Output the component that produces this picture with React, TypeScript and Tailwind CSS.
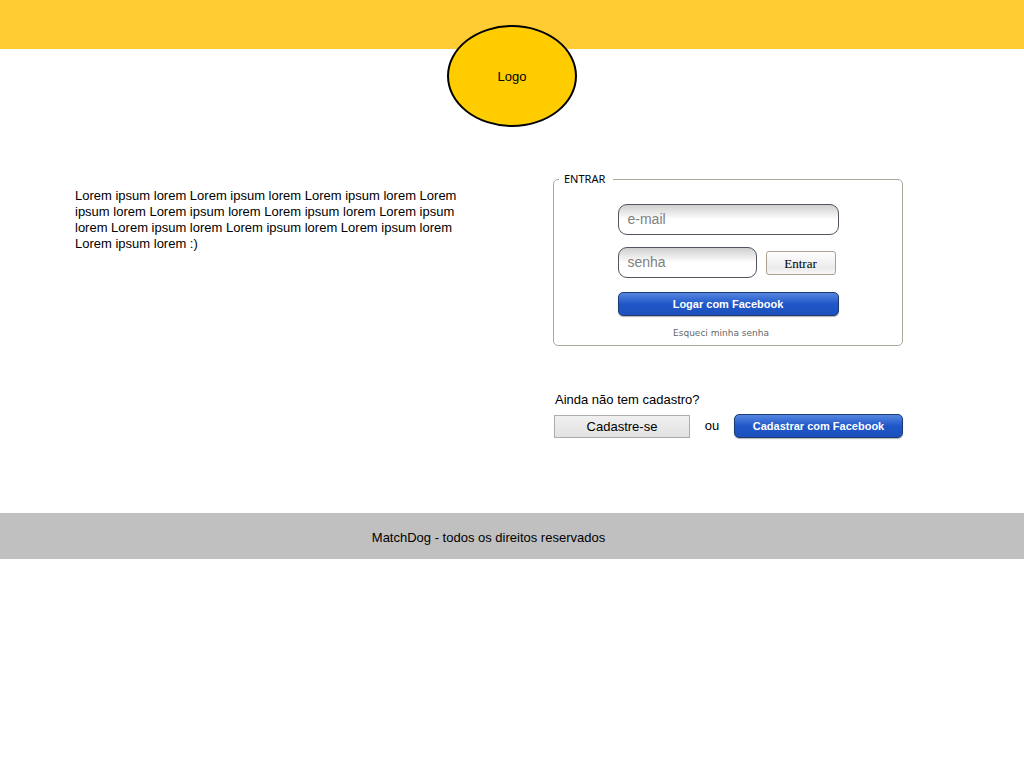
import React from "react";

const field =
  "h-[31px] rounded-[9px] border border-[#50555f] bg-linear-to-b from-[#cfcfcf] via-white via-50% to-white px-[9px] pb-[2px] text-[14px] text-black outline-none placeholder:text-[#808080]";

const facebook =
  "h-[24px] rounded-[5px] border border-[#1d3a73] bg-linear-to-b from-[#5585e0] via-[#1f57c8] via-50% to-[#1c50bd] pb-[1px] text-[11px] font-bold text-white shadow-[0_1px_1px_rgba(0,0,0,0.3)]";

export default function App() {
  return (
    <div className="min-h-screen bg-white font-['Liberation_Sans',Arial,sans-serif] text-[13px] leading-[16px] text-black">
      <header className="relative h-[49px] bg-[#ffcc33]">
        <div className="absolute top-[25px] left-1/2 flex h-[102px] w-[130px] -translate-x-1/2 items-center justify-center rounded-[50%] border-2 border-black bg-[#ffcc00] pt-[2px]">
          Logo
        </div>
      </header>

      <main className="flex items-start justify-between gap-8 pt-[122px] pr-[121px] pb-[75px] pl-[75px]">
        <p className="mt-[17px] max-w-[385px]">
          Lorem ipsum lorem Lorem ipsum lorem Lorem ipsum lorem Lorem ipsum lorem
          Lorem ipsum lorem Lorem ipsum lorem Lorem ipsum lorem Lorem ipsum lorem
          Lorem ipsum lorem Lorem ipsum lorem Lorem ipsum lorem :)
        </p>

        <div className="w-[350px] shrink-0">
          <form onSubmit={(e) => e.preventDefault()}>
            <fieldset className="rounded-[5px] border border-[#aca899] px-[5px] pb-[4px]">
              <legend className="pr-[8px] pl-[5px] font-['Noto_Sans',Tahoma,sans-serif] text-[11px]">
                ENTRAR
              </legend>
              <div className="mx-auto mt-[17px] flex w-[221px] flex-col">
                <input
                  type="email"
                  aria-label="e-mail"
                  placeholder="e-mail"
                  className={`${field} w-full`}
                />
                <div className="mt-[12px] flex items-center justify-between pr-[3px]">
                  <input
                    type="password"
                    aria-label="senha"
                    placeholder="senha"
                    className={`${field} w-[139px]`}
                  />
                  <button
                    type="submit"
                    className="h-[24px] w-[70px] rounded-[3px] border border-[#aea08e] bg-linear-to-b from-white via-[#ebebeb] via-70% to-[#f6f6f6] pt-[2px] font-['Liberation_Serif','Times_New_Roman',serif] text-[13px]"
                  >
                    Entrar
                  </button>
                </div>
                <button type="button" className={`${facebook} mt-[14px] w-full`}>
                  Logar com Facebook
                </button>
                <a
                  href="#senha"
                  className="mt-[9px] mr-[14px] self-center font-['DejaVu_Sans',Verdana,sans-serif] text-[9px] text-[#666666]"
                >
                  Esqueci minha senha
                </a>
              </div>
            </fieldset>
          </form>

          <p className="mt-[46px] pl-[2px]">Ainda não tem cadastro?</p>
          <div className="mt-[6px] flex items-center justify-between pl-px">
            <button
              type="button"
              className="h-[23px] w-[136px] border border-[#acacac] bg-linear-to-b from-[#f0f0f0] to-[#e2e2e2] pt-[2px]"
            >
              Cadastre-se
            </button>
            <span>ou</span>
            <button type="button" className={`${facebook} w-[169px]`}>
              Cadastrar com Facebook
            </button>
          </div>
        </div>
      </main>

      <footer className="bg-[#c0c0c0] pt-[17px] pr-[47px] pb-[13px] text-center">
        MatchDog - todos os direitos reservados
      </footer>
    </div>
  );
}
